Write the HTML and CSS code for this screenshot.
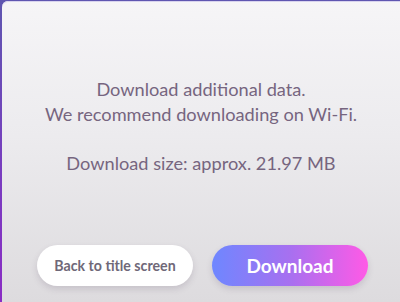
FILE: index.html
```html
<!DOCTYPE html>
<html lang="en">
<head>
    <meta charset="UTF-8">
    <meta name="viewport" content="width=device-width, initial-scale=1.0">
    <title>Download additional data</title>
    <link rel="stylesheet" href="styles.css">
</head>
<body>
    <div class="frame">
        <div class="dialog">
            <div class="message">
                <p>Download additional data.<br>We recommend downloading on Wi-Fi.</p>
                <p>Download size: approx. 21.97 MB</p>
            </div>
            <div class="actions">
                <button class="btn btn-back">Back to title screen</button>
                <button class="btn btn-download">Download</button>
            </div>
        </div>
    </div>
</body>
</html>
```

FILE: styles.css
```css
body {
    margin: 0;
    width: 400px;
    height: 302px;
    overflow: hidden;
    font-family: Lato, 'Open Sans', sans-serif;
}

.frame {
    width: 400px;
    height: 302px;
    box-sizing: border-box;
    padding: 1px 0 0 2px;
    background: linear-gradient(180deg, #5f56b0 0%, #7a3cc0 60%, #8a2cc4 100%);
    display: flex;
}

.dialog {
    flex: 1;
    border-top-left-radius: 6px;
    background: linear-gradient(180deg, #f6f5f7 0%, #ecebee 45%, #dddbde 100%);
    box-shadow: inset 0 1px 0 #d8d3ee;
    display: flex;
    flex-direction: column;
    align-items: center;
}

.message {
    margin-top: 76px;
    text-align: center;
    color: #76657f;
    font-size: 18.2px;
    font-weight: 400;
    line-height: 25px;
}

.message p {
    margin: 0 0 24px;
}

.actions {
    margin-top: auto;
    margin-bottom: 16px;
    display: flex;
    gap: 19px;
    padding-left: 3px;
}

.btn {
    width: 156px;
    height: 41px;
    border: none;
    border-radius: 21px;
    font-family: Lato, 'Open Sans', sans-serif;
    cursor: pointer;
    box-shadow: 0 3px 6px rgba(90, 70, 100, 0.18);
}

.btn-back {
    background: #ffffff;
    color: #6f6878;
    font-size: 14.2px;
    font-weight: 700;
}

.btn-download {
    background: linear-gradient(90deg, #6e87ff 0%, #a770f0 50%, #ff5ae6 100%);
    color: #ffffff;
    font-size: 19px;
    font-weight: 700;
}
```
